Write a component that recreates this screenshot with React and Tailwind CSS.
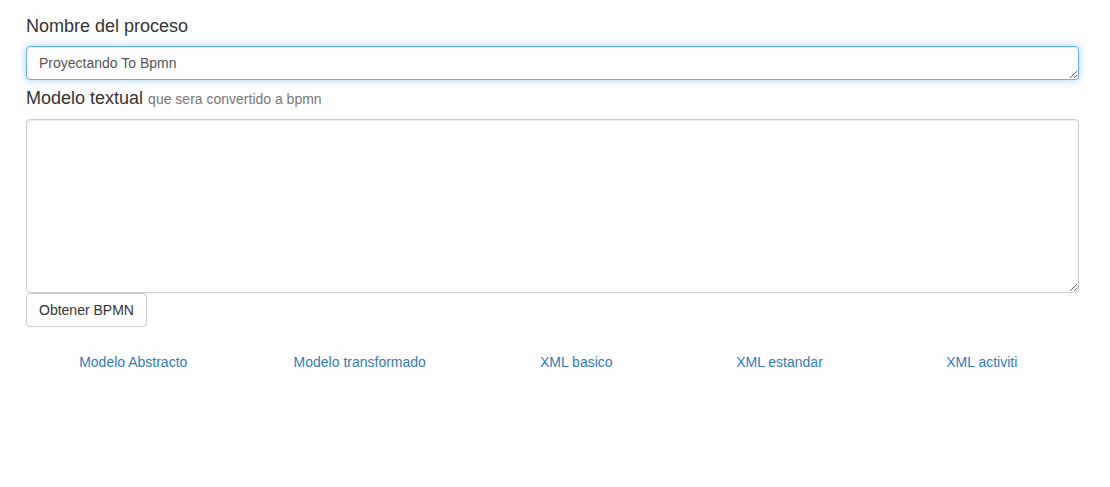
import React from "react";

export default function App() {
  const links = [
    "Modelo Abstracto",
    "Modelo transformado",
    "XML basico",
    "XML estandar",
    "XML activiti",
  ];
  return (
    <div
      className="min-h-[487px] bg-white text-[#333] text-[14px] leading-[20px]"
      style={{ fontFamily: '"Liberation Sans", Arial, sans-serif' }}
    >
      <div className="ml-[26px] w-[1053px] pt-[16px]">
        <h4 className="mt-0 mb-0 text-[18px] leading-[20px] font-normal">Nombre del proceso</h4>
        <textarea
          className="mt-[10px] block w-full h-[34px] px-[12px] py-[6px] text-[14px] leading-[20px] text-[#555] bg-white border border-[#66afe9] rounded-[4px] outline-none shadow-[inset_0_1px_1px_rgba(0,0,0,0.075),0_0_8px_rgba(102,175,233,0.6)]"
          defaultValue="Proyectando To Bpmn"
        />
        <h4 className="mt-[8px] mb-0 text-[18px] leading-[20px] h-[20px] font-normal">
          Modelo textual{" "}
          <small className="text-[14px] leading-none text-[#777]">que sera convertido a bpmn</small>
        </h4>
        <textarea
          className="mt-[11px] block w-full h-[174px] px-[12px] py-[6px] text-[14px] leading-[20px] text-[#555] bg-white border border-[#ccc] rounded-[4px] outline-none shadow-[inset_0_1px_1px_rgba(0,0,0,0.075)]"
        />
        <button className="block h-[34px] px-[12px] text-[14px] leading-[20px] text-[#333] bg-white border border-[#ccc] rounded-[4px]">
          Obtener BPMN
        </button>
        <div className="mt-[25px] grid grid-cols-[214.5px_238.5px_194.5px_212px_192.5px]">
          {links.map((l) => (
            <a key={l} href="#" className="block text-center text-[#337ab7] leading-[20px] no-underline">
              {l}
            </a>
          ))}
        </div>
      </div>
    </div>
  );
}
